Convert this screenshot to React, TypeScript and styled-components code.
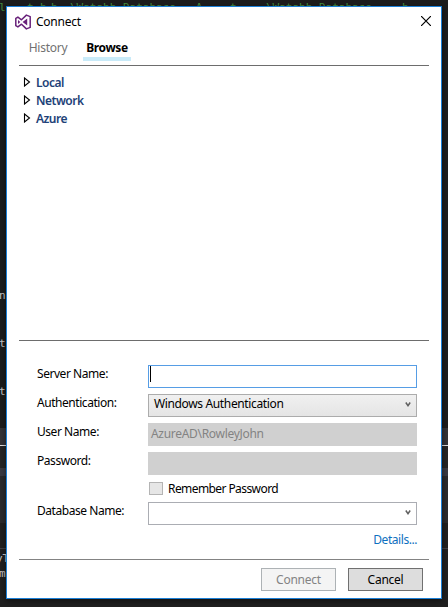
import React from "react";
import styled, { createGlobalStyle } from "styled-components";

const GlobalStyle = createGlobalStyle`
  html, body { margin: 0; width: 448px; height: 607px; overflow: hidden; background: #1e1e1e; }
  *, *::before, *::after { box-sizing: border-box; }
`;

const Desktop = styled.div`
  position: relative;
  width: 448px;
  height: 607px;
  padding: 6px;
  overflow: hidden;
  font-family: "Noto Sans", "Open Sans", sans-serif;
  font-size: 12px;
  color: #000;
  background: #1e1e1e;
`;

const Editor = styled.div`
  position: absolute;
  inset: 0;
  display: flex;
  flex-direction: column;
`;

const Band = styled.div<{ $h: number; $c: string }>`
  flex: 0 0 ${(p) => p.$h}px;
  background: ${(p) => p.$c};
`;

/* Editor text that shows around the edges of the dialog */
const Code = styled.span<{ $x: number; $y: number; $c?: string }>`
  position: absolute;
  left: ${(p) => p.$x}px;
  top: ${(p) => p.$y}px;
  font: 11px/14px "DejaVu Sans Mono", monospace;
  white-space: pre;
  color: ${(p) => p.$c ?? "#c8c8c8"};
`;

const Dialog = styled.section`
  position: relative;
  display: flex;
  flex-direction: column;
  width: 436px;
  height: 593px;
  padding: 0 12px;
  background: #fff;
  border: 1px solid #1b7fd6;
  box-shadow: 0 2px 6px rgba(0, 0, 0, 0.5);
`;

const TitleBar = styled.header`
  display: flex;
  align-items: center;
  height: 29px;
  margin: 0 -4px;
`;

const Text = styled.span<{ $ls?: number; $c?: string; $w?: number; $up?: number }>`
  line-height: 16px;
  white-space: pre;
  letter-spacing: ${(p) => p.$ls ?? -0.25}px;
  color: ${(p) => p.$c ?? "inherit"};
  font-weight: ${(p) => p.$w ?? 400};
  margin-bottom: ${(p) => p.$up ?? 0}px;
`;

const Title = styled(Text)`
  margin-left: 5px;
`;

const CloseButton = styled.button`
  display: flex;
  margin: 0 2px 1px auto;
  padding: 0;
  border: 0;
  background: none;
`;

const Tabs = styled.nav`
  display: flex;
  height: 29px;
  padding-left: 5px;
  gap: 11px;
`;

const Tab = styled.div<{ $active?: boolean }>`
  height: 25px;
  width: 48px;
  padding-top: 3px;
  text-align: center;
  border-bottom: 4px solid ${(p) => (p.$active ? "#c9ebf9" : "transparent")};
`;

const Tree = styled.div`
  height: 276px;
  padding: 8px 0 0 4px;
  border-top: 1px solid #6d6d6d;
  border-bottom: 1px solid #6d6d6d;
`;

const TreeRow = styled.div`
  display: flex;
  align-items: center;
  gap: 5px;
  height: 18px;

  svg {
    margin-bottom: 2px;
  }
`;

const Form = styled.form`
  display: grid;
  grid-template-columns: 111px 269px;
  grid-template-rows: 23px 23px 23px 23px 15px 23px;
  row-gap: 6px;
  margin: 24px 0 0 18px;
`;

const Label = styled(Text).attrs({ $ls: -0.45 })`
  align-self: start;
  margin-top: 1px;
`;

const Field = styled.div<{ $border: string; $bg: string; $pad?: number }>`
  display: flex;
  align-items: center;
  justify-content: space-between;
  padding: 0 5px 0 ${(p) => p.$pad ?? 2}px;
  border: 1px solid ${(p) => p.$border};
  background: ${(p) => p.$bg};

  svg {
    margin-bottom: 2px;
  }
`;

const Caret = styled.i`
  align-self: start;
  width: 1px;
  height: 16px;
  background: #000;
`;

const Remember = styled.label`
  grid-column: 2;
  display: flex;
  align-items: center;
  gap: 5px;
  padding-left: 1px;
`;

const Box = styled.i`
  width: 14px;
  height: 13px;
  border: 1px solid #b4b4b4;
  background: #e6e6e6;
`;

const Details = styled.div`
  display: flex;
  justify-content: flex-end;
  height: 34px;
  padding: 7px 12px 0 0;
`;

const Footer = styled.footer`
  display: flex;
  justify-content: flex-end;
  gap: 12px;
  padding: 8px 6px 0 0;
  border-top: 1px solid #838383;
`;

const Button = styled.button<{ $muted?: boolean }>`
  width: 75px;
  height: 23px;
  padding: 0;
  font: inherit;
  color: ${(p) => (p.$muted ? "#838383" : "#000")};
  background: ${(p) => (p.$muted ? "#f4f4f4" : "#ddd")};
  border: 1px solid ${(p) => (p.$muted ? "#adb2b5" : "#707070")};
`;

const Chevron = () => (
  <svg width="6" height="5" viewBox="0 0 6 5">
    <path d="M.8.5 3 3.7 5.2.5" fill="none" stroke="#606060" strokeWidth="1.5" />
  </svg>
);

const Expander = () => (
  <svg width="8" height="10" viewBox="0 0 8 10">
    <path d="M1.5 1v8L6.5 5z" fill="#fff" stroke="#000" strokeWidth="1.1" />
  </svg>
);

const Logo = () => (
  <svg width="16" height="16" viewBox="0 0 16 16">
    <path
      fill="#fff"
      stroke="#68217a"
      strokeWidth="1.5"
      strokeLinejoin="round"
      d="M11.4 1.1 15.2 2.6v10.8l-3.8 1.5-4.9-4.7-3.6 2.7L.8 11.7V4.3l2.1-1.2 3.6 2.7z"
    />
    <path fill="#68217a" d="M12.2 4.6v6.8L7.6 8zM3 5.9 5.3 8 3 10.1z" />
  </svg>
);

export default function App() {
  return (
    <>
      <GlobalStyle />
      <Desktop>
        <Editor>
          <Band $h={428} $c="#1c1c1c" />
          <Band $h={17} $c="#333337" />
          <Band $h={1} $c="#e0e0e0" />
          <Band $h={22} $c="#252526" />
          <Band $h={8} $c="#3a3a42" />
          <Band $h={47} $c="#2a2a2c" />
          <Band $h={25} $c="#202020" />
          <Band $h={1} $c="#3f3f46" />
          <Band $h={58} $c="#202020" />
          <Code $x={-1} $y={1} $c="#458b3e">l</Code>
          <Code $x={27} $y={1} $c="#458b3e">t</Code>
          <Code $x={40} $y={1} $c="#458b3e">b</Code>
          <Code $x={51} $y={1} $c="#458b3e">b</Code>
          <Code $x={70} $y={1} $c="#458b3e">\Watabb Database   A</Code>
          <Code $x={230} $y={1} $c="#458b3e">t</Code>
          <Code $x={266} $y={1} $c="#458b3e">\Watabb Database</Code>
          <Code $x={402} $y={1} $c="#458b3e">b</Code>
          <Code $x={-1} $y={289}>n</Code>
          <Code $x={-1} $y={337}>t</Code>
          <Code $x={-1} $y={385}>t</Code>
          <Code $x={-4} $y={552}>yT</Code>
          <Code $x={-1} $y={567}>m</Code>
        </Editor>
        <Dialog>
          <TitleBar>
            <Logo />
            <Title>Connect</Title>
            <CloseButton aria-label="Close">
              <svg width="10" height="10" viewBox="0 0 10 10">
                <path d="M0 0l10 10M10 0L0 10" stroke="#000" strokeWidth="1.2" />
              </svg>
            </CloseButton>
          </TitleBar>
          <Tabs>
            <Tab><Text $c="#717171">History</Text></Tab>
            <Tab $active><Text $w={700} $ls={-0.4}>Browse</Text></Tab>
          </Tabs>
          <Tree>
            {["Local", "Network", "Azure"].map((name) => (
              <TreeRow key={name}>
                <Expander />
                <Text $w={600} $ls={-0.5} $c="#1e4278">{name}</Text>
              </TreeRow>
            ))}
          </Tree>
          <Form>
            <Label>Server Name:</Label>
            <Field $border="#569de5" $bg="#fff" $pad={1}><Caret /></Field>
            <Label>Authentication:</Label>
            <Field $border="#acacac" $bg="linear-gradient(#f0f0f0, #e5e5e5)" $pad={5}>
              <Text $ls={-0.36} $up={4}>Windows Authentication</Text>
              <Chevron />
            </Field>
            <Label>User Name:</Label>
            <Field $border="#d0d0d0" $bg="#d0d0d0">
              <Text $ls={-0.3} $up={2} $c="#838383">AzureAD\RowleyJohn</Text>
            </Field>
            <Label>Password:</Label>
            <Field $border="#d0d0d0" $bg="#d0d0d0" />
            <Remember><Box /><Text $ls={-0.58}>Remember Password</Text></Remember>
            <Label>Database Name:</Label>
            <Field $border="#abadb3" $bg="#fff"><span /><Chevron /></Field>
          </Form>
          <Details><Text $ls={-0.45} $c="#0e70c0">Details...</Text></Details>
          <Footer>
            <Button $muted><Text>Connect</Text></Button>
            <Button><Text>Cancel</Text></Button>
          </Footer>
        </Dialog>
      </Desktop>
    </>
  );
}
